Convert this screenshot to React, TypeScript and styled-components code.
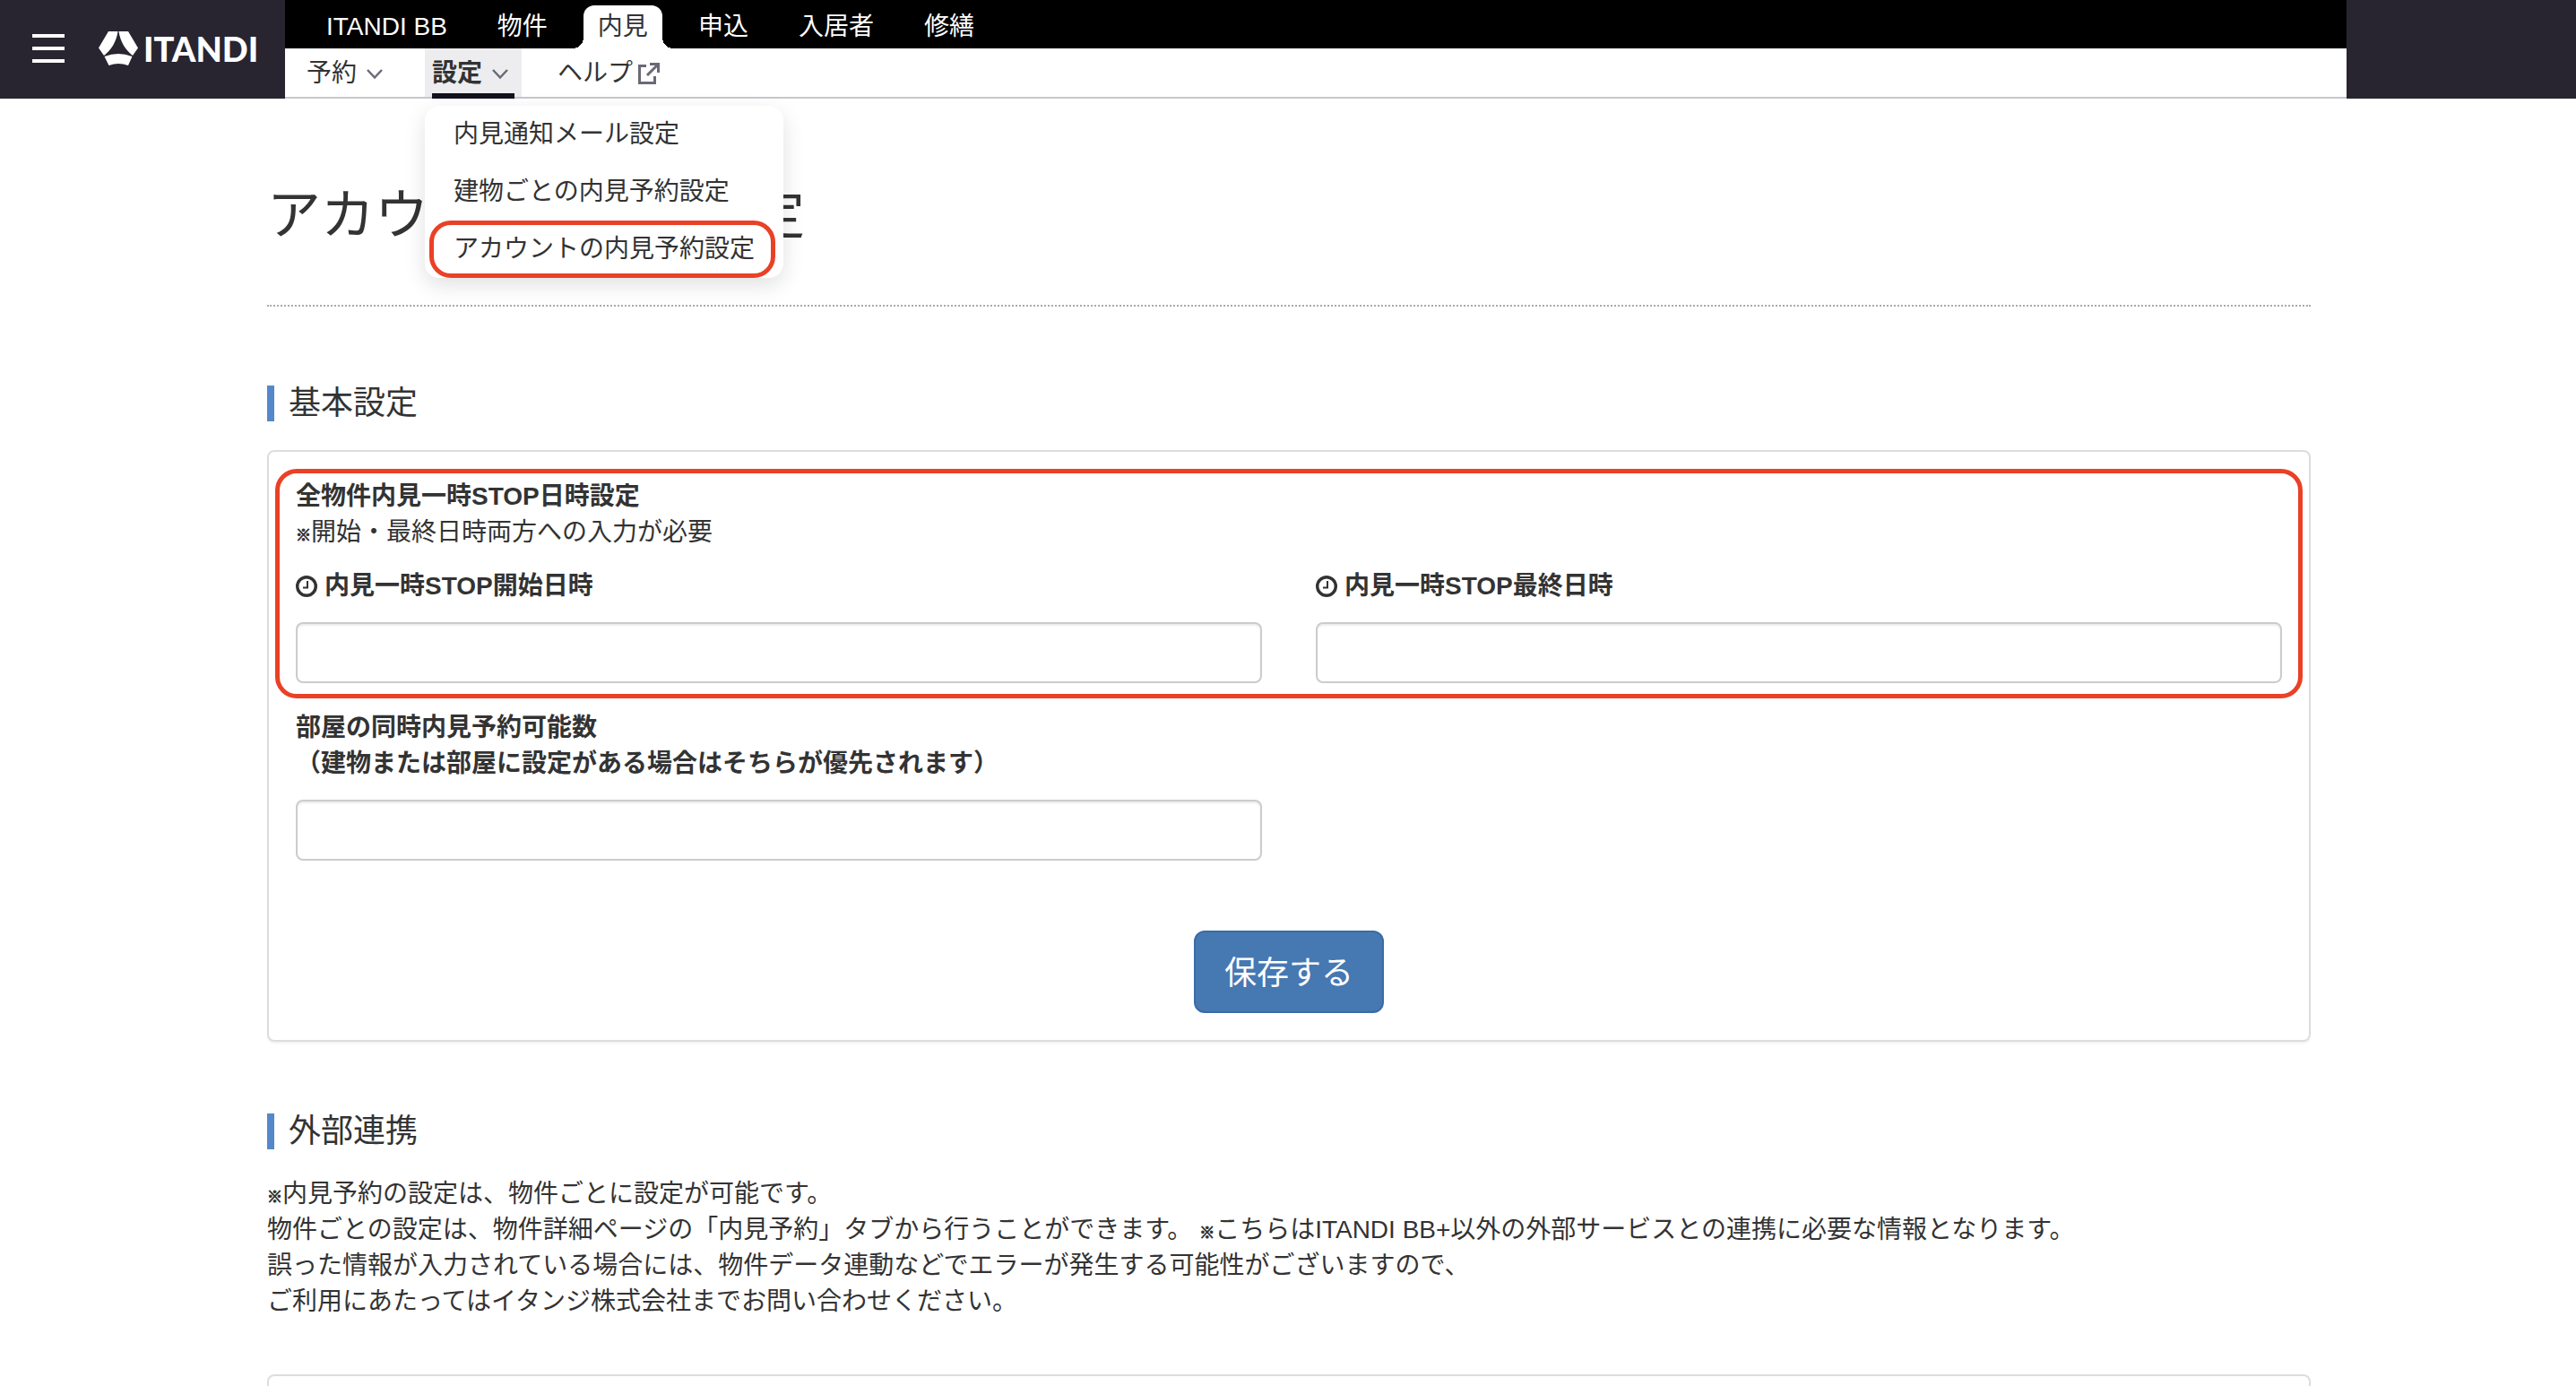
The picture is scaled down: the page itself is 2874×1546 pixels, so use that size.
import { useState } from 'react';
import styled, { createGlobalStyle, css } from 'styled-components';

const textColor = '#333333';
const darkColor = '#282530';
const mutedColor = '#6b6976';
const markColor = '#ea4126';

const GlobalStyle = createGlobalStyle`
  * {
    box-sizing: border-box;
  }

  body {
    margin: 0;
    background-color: #ffffff;
    color: ${textColor};
    font-family: 'Liberation Sans', 'Noto Sans CJK JP', sans-serif;
    font-size: 28px;
    line-height: 40px;
  }
`;

const Page = styled.div`
  height: 100vh;
  overflow: hidden;
`;

const Header = styled.header`
  display: flex;
  height: 110px;
  background-color: ${darkColor};
`;

const Brand = styled.div`
  display: flex;
  align-items: center;
  gap: 38px;
  width: 318px;
  padding: 0 0 2px 36px;
`;

const MenuButton = styled.button`
  display: flex;
  flex-direction: column;
  gap: 10px;
  width: 36px;
  padding: 0;
  border: none;
  background: none;
  cursor: pointer;
`;

const MenuLine = styled.span`
  height: 4px;
  background-color: white;
`;

const Logo = styled.a`
  display: flex;
  align-items: center;
  gap: 6px;
  color: white;
  font-family: Lato, sans-serif;
  font-size: 38px;
  font-weight: 900;
  text-decoration: none;
`;

const Navigation = styled.div`
  flex: 1;
  background-color: white;
`;

const HeaderEnd = styled.div`
  width: 256px;
`;

const Tabs = styled.nav`
  display: flex;
  gap: 24px;
  height: 54px;
  padding: 6px 30px 0;
  background-color: black;
`;

const Tab = styled.a<{ $active?: boolean }>`
  position: relative;
  padding: 0 16px;
  line-height: 48px;
  color: white;
  text-decoration: none;

  ${(props) =>
    props.$active &&
    css`
      border-radius: 12px 12px 0 0;
      background-color: white;
      color: ${textColor};

      &:before,
      &:after {
        content: '';
        position: absolute;
        bottom: 0;
        width: 12px;
        height: 12px;
      }

      &:before {
        right: 100%;
        background: radial-gradient(circle at 0 0, transparent 12px, white 12px);
      }

      &:after {
        left: 100%;
        background: radial-gradient(circle at 100% 0, transparent 12px, white 12px);
      }
    `}
`;

const SubNav = styled.nav`
  display: flex;
  gap: 32px;
  height: 56px;
  padding: 0 16px;
  border-bottom: 2px solid #c8c7cf;
`;

const SubNavItem = styled.div`
  position: relative;
`;

const itemStyle = css`
  display: flex;
  align-items: center;
  gap: 4px;
  height: 54px;
  padding: 2px 8px 0;
  border: none;
  background: none;
  color: ${textColor};
  font-family: inherit;
  font-size: 28px;
  line-height: 40px;
  text-decoration: none;
  cursor: pointer;
`;

const SubNavButton = styled.button<{ $active?: boolean }>`
  ${itemStyle}

  ${(props) =>
    props.$active &&
    css`
      background-color: #ededef;
      font-weight: bold;

      &:after {
        content: '';
        position: absolute;
        top: 50px;
        left: 8px;
        right: 8px;
        height: 6px;
        background-color: #14121e;
      }
    `}
`;

const SubNavLink = styled.a`
  ${itemStyle}
`;

const Dropdown = styled.div`
  position: absolute;
  z-index: 1;
  top: 64px;
  left: 0;
  width: 400px;
  border-radius: 16px;
  background-color: white;
  box-shadow: 0 8px 24px rgba(0, 0, 0, 0.12);
`;

const DropdownLink = styled.a<{ $marked?: boolean }>`
  display: block;
  padding: 0 32px;
  line-height: 64px;
  color: ${textColor};
  text-decoration: none;
  white-space: nowrap;

  ${(props) =>
    props.$marked &&
    css`
      margin: 0 9px 0 5px;
      padding: 0 22px;
      border: 5px solid ${markColor};
      border-radius: 24px;
      line-height: 54px;
    `}
`;

const Main = styled.main`
  padding: 0 296px 0 298px;
`;

const Title = styled.h1`
  margin: 0 0 88px;
  padding: 90px 0 58px;
  border-bottom: 2px dotted #aaaaaa;
  font-size: 60px;
  font-weight: normal;
  line-height: 82px;
`;

const SectionTitle = styled.h2`
  margin: 0;
  padding-left: 16px;
  border-left: 8px solid #5588c9;
  font-size: 36px;
  font-weight: normal;
  line-height: 40px;
`;

const Card = styled.section`
  min-height: 120px;
  margin: 32px 0 80px;
  padding: 19px 7px 30px;
  border: 2px solid #dddddd;
  border-radius: 8px;
  box-shadow: 0 2px 2px rgba(0, 0, 0, 0.05);
`;

const StopSettings = styled.div`
  padding: 6px 18px 12px;
  border: 5px solid ${markColor};
  border-radius: 24px;
`;

const Columns = styled.div`
  display: grid;
  grid-template-columns: 1fr 1fr;
  gap: 60px;
`;

const RoomSettings = styled(Columns)`
  padding: 13px 23px 0;
`;

const GroupTitle = styled.div`
  font-weight: bold;
`;

const Note = styled.p`
  margin: 0 0 20px;
`;

const Mark = styled.span`
  font-size: 17px;
  font-weight: bold;
  line-height: 1;
  -webkit-text-stroke: 1px ${textColor};
`;

const Field = styled.div`
  display: flex;
  flex-direction: column;
  gap: 20px;
`;

const Label = styled.label`
  display: flex;
  align-items: center;
  gap: 8px;
  font-weight: bold;
`;

const Input = styled.input`
  width: 100%;
  height: 68px;
  padding: 12px 24px;
  border: 2px solid #cccccc;
  border-radius: 8px;
  box-shadow: inset 0 2px 2px rgba(0, 0, 0, 0.075);
  color: ${textColor};
  font-family: inherit;
  font-size: 28px;
`;

const SaveButton = styled.button`
  display: block;
  height: 92px;
  margin: 78px auto 0;
  padding: 0 32px 4px;
  border: 2px solid #3b6ba5;
  border-radius: 12px;
  background-color: #4678b2;
  color: white;
  font-family: inherit;
  font-size: 36px;
  cursor: pointer;
`;

const Description = styled.p`
  margin: 30px 0 61px;
`;

const LogoMark = () => (
  <svg width="44" height="38" viewBox="0 0 44 38" fill="white" aria-hidden="true">
    <path d="M11 0H21.5C20 11 14 21 6 27L0 18.5Z" />
    <path d="M33 0H22.5C24 11 30 21 38 27L44 18.5Z" />
    <path d="M6.5 28Q22 22 37.5 28L33 38Q22 34 11.5 38Z" />
  </svg>
);

const Chevron = () => (
  <svg width="32" height="32" viewBox="0 0 32 32" fill="none" stroke={mutedColor} strokeWidth="2.5">
    <path d="M8 12L16 20.5L24 12" />
  </svg>
);

const ExternalIcon = () => (
  <svg width="28" height="28" viewBox="0 0 28 28" fill="none" stroke={mutedColor} strokeWidth="3">
    <path d="M11 5.5H3.5V24.5H20.5V17" />
    <path d="M15 3.5H24.5V13M24.5 3.5L12 16" />
  </svg>
);

const ClockIcon = () => (
  <svg width="24" height="24" viewBox="0 0 24 24" fill="none" stroke={textColor}>
    <circle cx="12" cy="12" r="10.3" strokeWidth="3.4" />
    <path d="M13 6V13.5H8" strokeWidth="2" />
  </svg>
);

const tabs = ['ITANDI BB', '物件', '内見', '申込', '入居者', '修繕'];
const settings = ['内見通知メール設定', '建物ごとの内見予約設定', 'アカウントの内見予約設定'];

const App = () => {
  const [isOpen, setOpen] = useState(true);

  return (
    <Page>
      <GlobalStyle />

      <Header>
        <Brand>
          <MenuButton aria-label="メニュー">
            <MenuLine />
            <MenuLine />
            <MenuLine />
          </MenuButton>
          <Logo href="#">
            <LogoMark />
            ITANDI
          </Logo>
        </Brand>

        <Navigation>
          <Tabs>
            {tabs.map((tab) => (
              <Tab key={tab} href="#" $active={tab === '内見'}>
                {tab}
              </Tab>
            ))}
          </Tabs>

          <SubNav>
            <SubNavItem>
              <SubNavButton>
                予約
                <Chevron />
              </SubNavButton>
            </SubNavItem>
            <SubNavItem>
              <SubNavButton $active aria-expanded={isOpen} onClick={() => setOpen(!isOpen)}>
                設定
                <Chevron />
              </SubNavButton>
              {isOpen && (
                <Dropdown>
                  {settings.map((item) => (
                    <DropdownLink key={item} href="#" $marked={item.startsWith('アカウント')}>
                      {item}
                    </DropdownLink>
                  ))}
                </Dropdown>
              )}
            </SubNavItem>
            <SubNavItem>
              <SubNavLink href="#">
                ヘルプ
                <ExternalIcon />
              </SubNavLink>
            </SubNavItem>
          </SubNav>
        </Navigation>

        <HeaderEnd />
      </Header>

      <Main>
        <Title>アカウントの内見設定</Title>

        <SectionTitle>基本設定</SectionTitle>
        <Card>
          <StopSettings>
            <GroupTitle>全物件内見一時STOP日時設定</GroupTitle>
            <Note>
              <Mark>※</Mark>開始・最終日時両方への入力が必要
            </Note>
            <Columns>
              <Field>
                <Label htmlFor="stop_start">
                  <ClockIcon />
                  内見一時STOP開始日時
                </Label>
                <Input id="stop_start" type="text" />
              </Field>
              <Field>
                <Label htmlFor="stop_end">
                  <ClockIcon />
                  内見一時STOP最終日時
                </Label>
                <Input id="stop_end" type="text" />
              </Field>
            </Columns>
          </StopSettings>

          <RoomSettings>
            <Field>
              <Label htmlFor="room_limit">
                部屋の同時内見予約可能数
                <br />
                （建物または部屋に設定がある場合はそちらが優先されます）
              </Label>
              <Input id="room_limit" type="text" />
            </Field>
          </RoomSettings>

          <SaveButton>保存する</SaveButton>
        </Card>

        <SectionTitle>外部連携</SectionTitle>
        <Description>
          <Mark>※</Mark>内見予約の設定は、物件ごとに設定が可能です。
          <br />
          物件ごとの設定は、物件詳細ページの「内見予約」タブから行うことができます。 <Mark>※</Mark>
          こちらはITANDI BB+以外の外部サービスとの連携に必要な情報となります。
          <br />
          誤った情報が入力されている場合には、物件データ連動などでエラーが発生する可能性がございますので、
          <br />
          ご利用にあたってはイタンジ株式会社までお問い合わせください。
        </Description>
        <Card />
      </Main>
    </Page>
  );
};

export default App;
